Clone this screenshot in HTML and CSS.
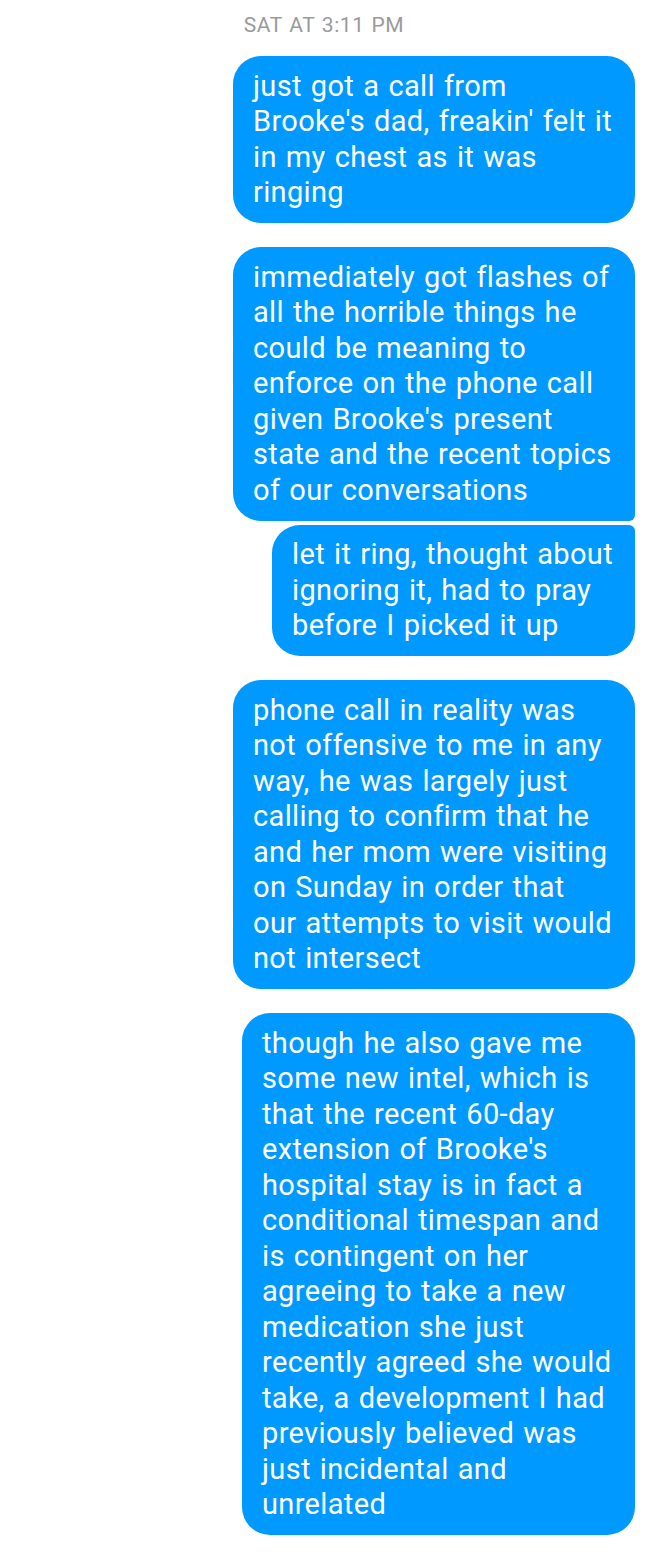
FILE: index.html
```html
<!DOCTYPE html>
<html>
<head>
<meta charset="utf-8">
<link rel="stylesheet" href="styles.css">
</head>
<body>
<div class="thread">
  <div class="timestamp">SAT AT 3:11 PM</div>
  <div class="group">
    <div class="bubble single">just got a call from Brooke's dad, freakin' felt it in my chest as it was ringing</div>
  </div>
  <div class="group">
    <div class="bubble first">immediately got flashes of all the horrible things he could be meaning to enforce on the phone call given Brooke's present state and the recent topics of our conversations</div>
    <div class="bubble last fit-short">let it ring, thought about ignoring it, had to pray before I picked it up</div>
  </div>
  <div class="group">
    <div class="bubble single">phone call in reality was not offensive to me in any way, he was largely just calling to confirm that he and her mom were visiting on Sunday in order that our attempts to visit would not intersect</div>
  </div>
  <div class="group">
    <div class="bubble single fit-mid">though he also gave me some new intel, which is that the recent 60-day extension of Brooke's hospital stay is in fact a conditional timespan and is contingent on her agreeing to take a new medication she just recently agreed she would take, a development I had previously believed was just incidental and unrelated</div>
  </div>
</div>
</body>
</html>
```

FILE: styles.css
```css
html, body {
  margin: 0;
  padding: 0;
  background: #ffffff;
}

.thread {
  display: flex;
  flex-direction: column;
  padding: 0 13px 0 0;
  font-family: Roboto, "Noto Sans", sans-serif;
}

.timestamp {
  align-self: center;
  margin-left: 13px;
  padding-top: 12px;
  height: 56px;
  box-sizing: border-box;
  font-size: 21px;
  line-height: 26px;
  letter-spacing: 0.6px;
  word-spacing: 1px;
  color: #9a9a9a;
}

.group {
  display: flex;
  flex-direction: column;
  align-items: flex-end;
  gap: 4px;
  margin-bottom: 24px;
}

.bubble {
  max-width: 362px;
  padding: 12.5px 20px;
  background: #0099ff;
  color: #ffffff;
  font-size: 29px;
  line-height: 35.5px;
  letter-spacing: 0.35px;
  word-spacing: 1.5px;
  border-radius: 28px;
}

.bubble.fit-short {
  width: 323px;
}

.bubble.fit-mid {
  width: 353px;
}

.bubble.first {
  border-bottom-right-radius: 6px;
}

.bubble.last {
  border-top-right-radius: 6px;
}
```
